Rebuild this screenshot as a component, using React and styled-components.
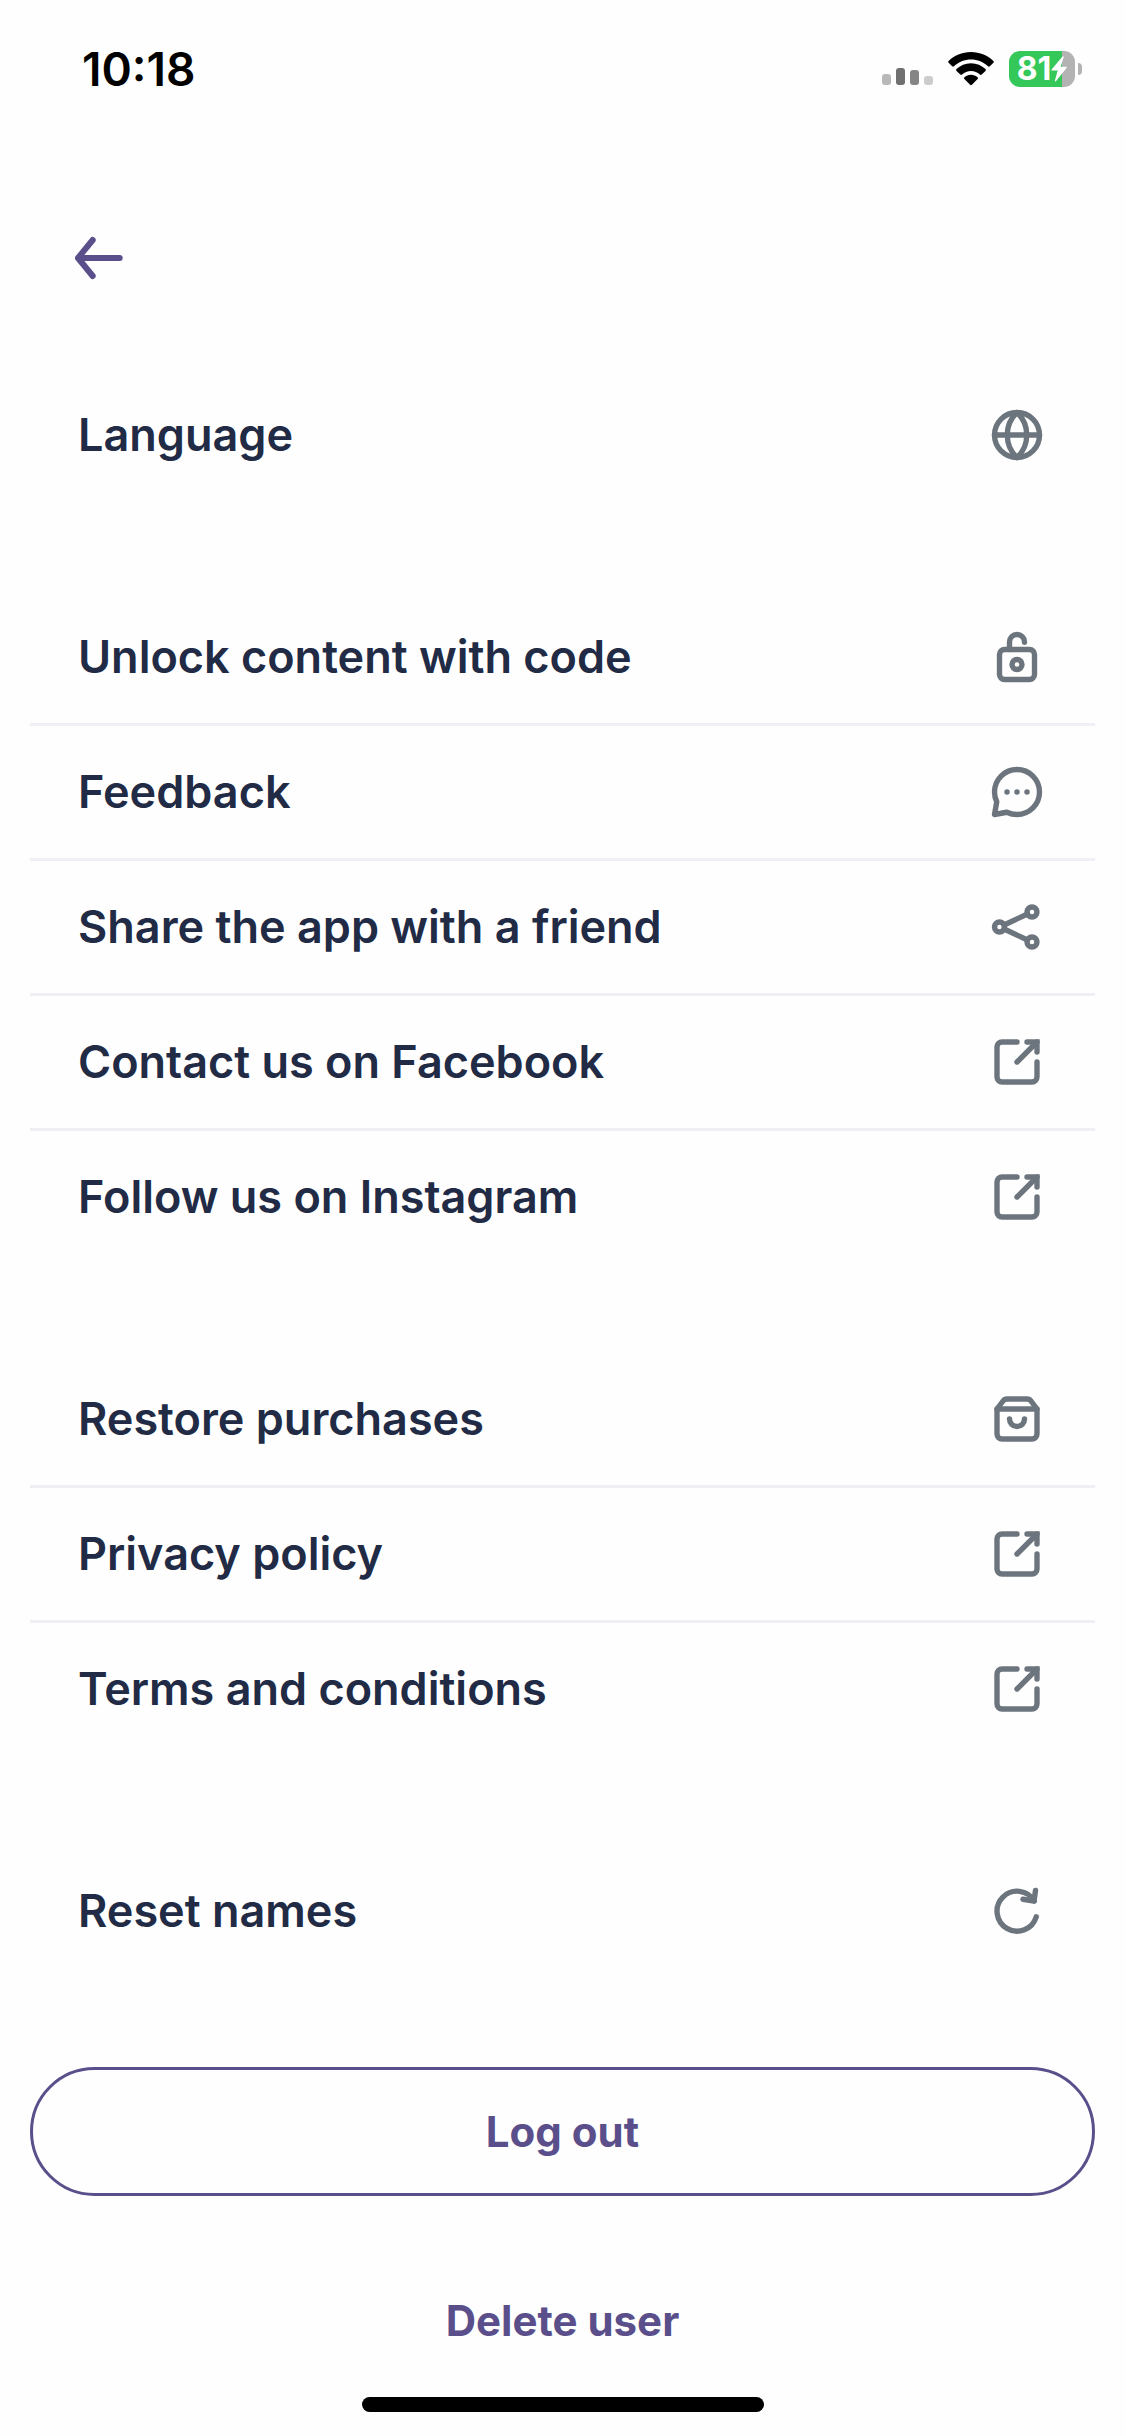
import styled, { createGlobalStyle } from 'styled-components';

// --- ICONS ---
const icons = {
  globe: (
    <>
      <circle cx="12" cy="12" r="9" />
      <path d="M12 3c-2.500 2.300-3.900 5.500-3.900 9s1.400 6.700 3.900 9c2.500-2.300 3.900-5.500 3.900-9S14.500 5.300 12 3z" />
      <path d="M3 12h18" />
    </>
  ),
  unlock: (
    <>
      <rect x="5" y="9" width="14" height="12" rx="2" />
      <circle cx="12" cy="15" r="2" />
      <path d="M9 9V6a3 3 0 0 1 6 0v.1" />
    </>
  ),
  chat: (
    <>
      <path d="M12 21a9 9 0 1 0-9-9c0 1.400.3 2.700.9 3.900L3 21l4.900-.9c1.300.6 2.700.9 4.100.9z" />
      <g fill="currentColor" stroke="none">
        <circle cx="8" cy="12" r="1.100" />
        <circle cx="12" cy="12" r="1.100" />
        <circle cx="16" cy="12" r="1.100" />
      </g>
    </>
  ),
  share: (
    <>
      <circle cx="18" cy="6" r="2" />
      <circle cx="18" cy="18" r="2" />
      <circle cx="5" cy="12" r="2" />
      <path d="M6.800 11.200l9.400-4.400M6.800 12.800l9.400 4.400" />
    </>
  ),
  external: (
    <>
      <path d="M12 4H6a2 2 0 0 0-2 2v12a2 2 0 0 0 2 2h12a2 2 0 0 0 2-2v-6" />
      <path d="M16 4h4v4" strokeLinejoin="miter" />
      <path d="M20 4l-8 8" />
    </>
  ),
  bag: (
    <>
      <path d="M4 8v10a2 2 0 0 0 2 2h12a2 2 0 0 0 2-2V8l-2.400-3.200A2 2 0 0 0 16 4H8a2 2 0 0 0-1.600.8z" />
      <path d="M4 8h16" />
      <path d="M9 12a3 3 0 0 0 6 0" />
    </>
  ),
  reset: (
    <>
      <path d="M18.900 8A8 8 0 1 0 19.700 14.300" />
      <path d="M19.400 3.800L18.800 8l-4.400-.7" />
    </>
  ),
};

const groups = [
  [{ label: 'Language', icon: 'globe' }],
  [
    { label: 'Unlock content with code', icon: 'unlock' },
    { label: 'Feedback', icon: 'chat' },
    { label: 'Share the app with a friend', icon: 'share' },
    { label: 'Contact us on Facebook', icon: 'external', href: '#facebook' },
    { label: 'Follow us on Instagram', icon: 'external', href: '#instagram' },
  ],
  [
    { label: 'Restore purchases', icon: 'bag' },
    { label: 'Privacy policy', icon: 'external', href: '#privacy' },
    { label: 'Terms and conditions', icon: 'external', href: '#terms' },
  ],
  [{ label: 'Reset names', icon: 'reset' }],
];

// --- STYLES ---
const GlobalStyle = createGlobalStyle`
  * {
    box-sizing: border-box;
  }

  body {
    margin: 0;
    background: #fefefe;
    font-family: Inter, 'Liberation Sans', sans-serif;
  }

  button {
    font-family: inherit;
    cursor: pointer;
  }
`;

const Screen = styled.div`
  display: flex;
  flex-direction: column;
  min-height: 100vh;
`;

const StatusBar = styled.div`
  display: flex;
  align-items: center;
  justify-content: space-between;
  height: 138px;
  padding: 0 43px 0 82px;
`;

const Time = styled.time`
  font-size: 46px;
  font-weight: 600;
  color: #000;
`;

const StatusIcons = styled.div`
  display: flex;
  align-items: center;
  gap: 15px;
`;

const Battery = styled.div`
  display: flex;
  align-items: center;
  gap: 3px;
`;

const BatteryLevel = styled.div`
  display: flex;
  align-items: center;
  justify-content: center;
  width: 66px;
  height: 36px;
  border-radius: 11px;
  background: linear-gradient(to right, #34c759 80%, #b3b3b3 80%);
  color: #fff;
  font-size: 32px;
  font-weight: 700;
  line-height: 36px;
`;

const BatteryCap = styled.div`
  width: 4px;
  height: 12px;
  border-radius: 0 4px 4px 0;
  background: #b3b3b3;
`;

const Header = styled.header`
  padding: 84px 63px 75px;
`;

const BackButton = styled.button`
  display: block;
  padding: 0;
  border: none;
  background: none;
  color: #5a4f8b;

  svg {
    display: block;
  }
`;

const Content = styled.main`
  display: flex;
  flex-direction: column;
  gap: 90px;
  padding: 0 30px;
`;

const Group = styled.ul`
  margin: 0;
  padding: 0;
  list-style: none;
`;

const Item = styled.li`
  & + & {
    border-top: 3px solid #eef0f6;
  }
`;

const Row = styled.button`
  display: flex;
  align-items: center;
  justify-content: space-between;
  width: 100%;
  height: 132px;
  padding: 0 48px;
  border: none;
  background: none;
  color: #222b45;
  font-size: 45px;
  font-weight: 600;
  text-align: left;
  text-decoration: none;
`;

const RowLabel = styled.span`
  padding-bottom: 2px;
`;

const RowIcon = styled.svg`
  flex-shrink: 0;
  width: 60px;
  height: 60px;
  color: #6c757d;
`;

const Actions = styled.div`
  display: flex;
  flex-direction: column;
  gap: 60px;
`;

const ActionButton = styled.button`
  height: 129px;
  border: 3px solid ${({ $outlined }) => ($outlined ? '#5a4f8b' : 'transparent')};
  border-radius: 66px;
  background: none;
  color: #5a4f8b;
  font-size: 42px;
  font-weight: 700;
`;

const HomeIndicator = styled.div`
  width: 402px;
  height: 15px;
  margin: 12px auto 24px;
  border-radius: 8px;
  background: #000;
`;

// --- COMPONENTS ---
const SettingsRow = ({ label, icon, href }) => (
  <Item>
    <Row as={href ? 'a' : 'button'} href={href}>
      <RowLabel>{label}</RowLabel>
      <RowIcon
        viewBox="0 0 24 24"
        fill="none"
        stroke="currentColor"
        strokeWidth="2.150"
        strokeLinecap="round"
        strokeLinejoin="round"
        aria-hidden="true"
      >
        {icons[icon]}
      </RowIcon>
    </Row>
  </Item>
);

const PhoneStatus = () => (
  <StatusBar>
    <Time>10:18</Time>
    <StatusIcons>
      <svg width="51" height="36" viewBox="0 0 51 36" aria-label="Signal">
        <rect x="0" y="23" width="9" height="11" rx="3" fill="#b8b8b8" />
        <rect x="14" y="17" width="9" height="17" rx="3" fill="#707070" />
        <rect x="28" y="19" width="9" height="15" rx="3" fill="#858585" />
        <rect x="42" y="25" width="9" height="9" rx="3" fill="#cccccc" />
      </svg>
      <svg width="46" height="36" viewBox="0 0 46 36" aria-label="Wi-Fi">
        <path d="M23 1C14 1 6 4.500.6 9.900a1.300 1.300 0 0 0 0 1.800l3.600 3.500a1.300 1.300 0 0 0 1.800 0C10.500 11 16.500 8.400 23 8.400S35.500 11 40 15.200a1.300 1.300 0 0 0 1.800 0l3.600-3.500a1.300 1.300 0 0 0 0-1.800C40 4.500 32 1 23 1z" />
        <path d="M23 12.300c-5.600 0-10.700 2.200-14.500 5.800a1.300 1.300 0 0 0 0 1.800l3.800 3.700a1.300 1.300 0 0 0 1.800 0 13 13 0 0 1 17.800 0 1.300 1.300 0 0 0 1.800 0l3.800-3.700a1.300 1.300 0 0 0 0-1.800C33.700 14.500 28.600 12.300 23 12.300z" />
        <path d="M23 23.800c-2.600 0-4.900.9-6.600 2.400a1.300 1.300 0 0 0 0 1.900l5.700 5.600a1.300 1.300 0 0 0 1.800 0l5.700-5.600a1.300 1.300 0 0 0 0-1.900c-1.700-1.500-4-2.400-6.600-2.400z" />
      </svg>
      <Battery>
        <BatteryLevel>
          81
          <svg width="16" height="26" viewBox="0 0 16 26" fill="#fff" aria-hidden="true">
            <path d="M11.500.5L.6 13.400c-.5.6-.2 1.200.5 1.200h5.600L3.900 24.500c-.3 1 .6 1.300 1.200.6L15.500 12c.5-.6.2-1.200-.5-1.200H9.600L12.700 1.200c.3-1-.6-1.400-1.200-.7z" />
          </svg>
        </BatteryLevel>
        <BatteryCap />
      </Battery>
    </StatusIcons>
  </StatusBar>
);

export default function App() {
  return (
    <>
      <GlobalStyle />
      <Screen>
        <PhoneStatus />
        <Header>
          <BackButton aria-label="Back">
            <svg
              width="72"
              height="72"
              viewBox="0 0 24 24"
              fill="none"
              stroke="currentColor"
              strokeWidth="2"
              strokeLinecap="round"
              strokeLinejoin="round"
            >
              <path d="M9.900 6L5 12l4.900 6M5 12h13.900" />
            </svg>
          </BackButton>
        </Header>
        <Content>
          {groups.map((items) => (
            <Group key={items[0].label}>
              {items.map((item) => (
                <SettingsRow key={item.label} {...item} />
              ))}
            </Group>
          ))}
          <Actions>
            <ActionButton $outlined>Log out</ActionButton>
            <ActionButton>Delete user</ActionButton>
          </Actions>
        </Content>
        <HomeIndicator />
      </Screen>
    </>
  );
}
